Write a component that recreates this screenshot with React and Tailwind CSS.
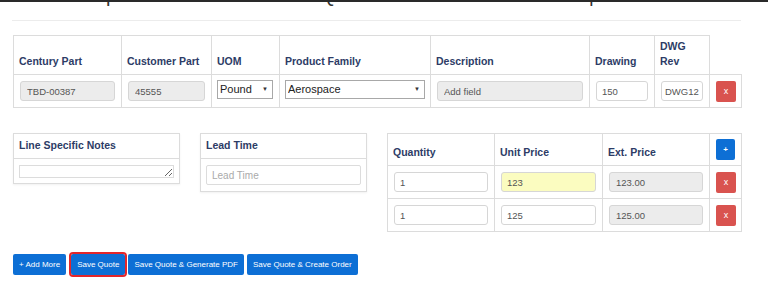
import React from 'react';

const th = 'border border-[#dcdcdc] px-[5px] pb-[5px] align-bottom text-left text-[10.5px] leading-[15px] font-bold text-[#2d3c66]';
const td = 'border border-[#dcdcdc] px-[6px] pt-[6px] pb-[5px] align-top leading-none';
const grey = 'block h-[20px] w-full rounded-[3px] border border-[#d6d6d6] bg-[#ececec] px-[6px] text-[9.5px] text-[#555] outline-none';
const plain = 'block h-[20px] w-full rounded-[3px] border border-[#d6d6d6] bg-white px-[5px] text-[9.5px] text-[#555] outline-none';
const yellow = 'block h-[20px] w-full rounded-[3px] border border-[#d6d6d6] bg-[#fbfcc0] px-[5px] text-[9.5px] text-[#555] outline-none';
const blue = 'h-[21px] rounded-[2px] bg-[#0d6fd5] px-[6px] text-[8px] text-white';

function FakeSelect({ value, width }) {
    return (
        <div className="relative block" style={{ width }}>
            <select
                value={value}
                onChange={() => {}}
                className="block h-[19px] w-full appearance-none border border-[#a8a8a8] bg-white pl-[2px] text-[11px] leading-[17px] text-[#222] outline-none"
            >
                <option>{value}</option>
            </select>
            <span className="pointer-events-none absolute right-[5px] top-[6px] text-[6px] leading-none text-[#333]">▼</span>
        </div>
    );
}

function DeleteButton() {
    return (
        <button className="flex h-[21px] w-[20px] items-center justify-center rounded-[2px] bg-[#d9534f] text-[9px] text-white">
            x
        </button>
    );
}

function Panel({ title, children }) {
    return (
        <div className="w-[167px] border border-[#dcdcdc] bg-white shadow-[0_1px_2px_rgba(0,0,0,0.06)]">
            <div className="flex h-[25px] items-center border-b border-[#dcdcdc] px-[5px] text-[10.5px] font-bold text-[#2d3c66]">
                {title}
            </div>
            {children}
        </div>
    );
}

export default function App() {
    const prices = [
        { qty: '1', unit: '123', ext: '123.00', active: true },
        { qty: '1', unit: '125', ext: '125.00', active: false },
    ];

    return (
        <div className="h-[296px] w-[768px] overflow-hidden bg-white font-['Liberation_Sans',Arial,sans-serif]">
            {/* clipped title line above */}
            <div className="h-[2px] bg-[#2a2a2a]" />
            <div className="h-[4px] overflow-hidden">
                <div className="-mt-[17px] flex text-[20px] leading-[20px] text-[#333]">
                    <span className="ml-[106px]">p</span>
                    <span className="ml-[203px]">Q</span>
                    <span className="ml-[253px] font-light">|</span>
                </div>
            </div>
            <div className="ml-[12px] mt-[14px] w-[729px] border-t border-[#ececec]" />

            {/* line item */}
            <table className="ml-[13px] mt-[14px] w-[728px] table-fixed border-collapse">
                <colgroup>
                    <col className="w-[108px]" />
                    <col className="w-[90px]" />
                    <col className="w-[68px]" />
                    <col className="w-[151px]" />
                    <col className="w-[159px]" />
                    <col className="w-[65px]" />
                    <col className="w-[55px]" />
                    <col className="w-[32px]" />
                </colgroup>
                <thead>
                    <tr className="h-[39px]">
                        <th className={th}>Century Part</th>
                        <th className={th}>Customer Part</th>
                        <th className={th}>UOM</th>
                        <th className={th}>Product Family</th>
                        <th className={th}>Description</th>
                        <th className={th}>Drawing</th>
                        <th className={th}>DWG<br />Rev</th>
                        <th className="border-0" />
                    </tr>
                </thead>
                <tbody>
                    <tr className="h-[33px]">
                        <td className={td}><input readOnly value="TBD-00387" className={grey} /></td>
                        <td className={td}><input readOnly value="45555" className={grey} /></td>
                        <td className="border border-[#dcdcdc] px-[5px] pt-[5px] align-top leading-none"><FakeSelect value="Pound" width={56} /></td>
                        <td className="border border-[#dcdcdc] px-[5px] pt-[5px] align-top leading-none"><FakeSelect value="Aerospace" width={140} /></td>
                        <td className={td}><input readOnly value="Add field" className={grey} /></td>
                        <td className={td}><input readOnly value="150" className={plain} /></td>
                        <td className={td}>
                            <input readOnly value="DWG12" className="block h-[20px] w-full rounded-[3px] border border-[#d6d6d6] bg-white px-[3px] text-[9.5px] text-[#555] outline-none" />
                        </td>
                        <td className={td}><DeleteButton /></td>
                    </tr>
                </tbody>
            </table>

            {/* notes, lead time, pricing */}
            <div className="ml-[13px] mt-[25px] flex items-start gap-[20px]">
                <Panel title="Line Specific Notes">
                    <div className="px-[5px] pb-[5px] pt-[6px]">
                        <textarea className="block h-[13px] w-full border border-[#dcdcdc] outline-none" />
                    </div>
                </Panel>
                <Panel title="Lead Time">
                    <div className="px-[5px] pb-[6px] pt-[6px]">
                        <input placeholder="Lead Time" className="block h-[20px] w-full rounded-[2px] border border-[#dcdcdc] px-[5px] text-[10px] text-[#555] outline-none placeholder:text-[#aaa]" />
                    </div>
                </Panel>

                <table className="w-[354px] table-fixed border-collapse">
                    <colgroup>
                        <col className="w-[107px]" />
                        <col className="w-[108px]" />
                        <col className="w-[107px]" />
                        <col className="w-[32px]" />
                    </colgroup>
                    <thead>
                        <tr className="h-[32px]">
                            <th className={th}>Quantity</th>
                            <th className={th}>Unit Price</th>
                            <th className={th}>Ext. Price</th>
                            <th className="border border-[#dcdcdc] px-[6px] align-middle">
                                <button className="flex h-[21px] w-[19px] items-center justify-center rounded-[2px] bg-[#0d6fd5] text-[8px] text-white">+</button>
                            </th>
                        </tr>
                    </thead>
                    <tbody>
                        {prices.map((p, i) => (
                            <tr key={i} className="h-[33px]">
                                <td className={td}><input readOnly value={p.qty} className={plain} /></td>
                                <td className={td}><input readOnly value={p.unit} className={p.active ? yellow : plain} /></td>
                                <td className={td}><input readOnly value={p.ext} className={grey} /></td>
                                <td className={td}><DeleteButton /></td>
                            </tr>
                        ))}
                    </tbody>
                </table>
            </div>

            {/* actions */}
            <div className="ml-[13px] mt-[22px] flex items-center">
                <button className={blue}>+ Add More</button>
                <button className={`${blue} ml-[5px] outline-2 outline-[#e3262b]`}>Save Quote</button>
                <button className={`${blue} ml-[3px]`}>Save Quote &amp; Generate PDF</button>
                <button className={`${blue} ml-[3px]`}>Save Quote &amp; Create Order</button>
            </div>
        </div>
    );
}
